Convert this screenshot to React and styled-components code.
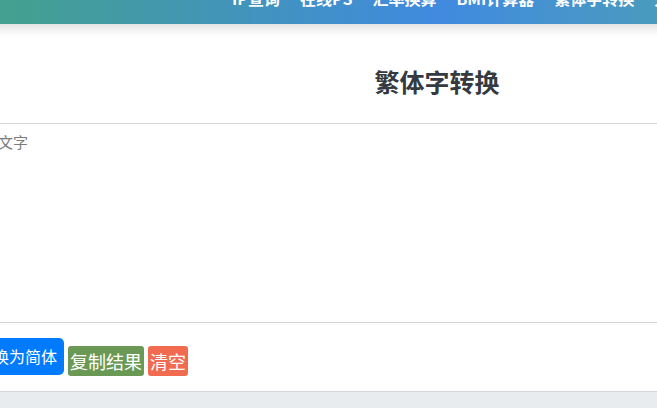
import React, { useState } from "react"
import styled, { createGlobalStyle } from "styled-components"

const GlobalStyle = createGlobalStyle`
html, body {
    margin: 0;
    padding: 0;
    overflow: hidden;
    background: #e9ecef;
    font-family: "Noto Sans CJK SC", "Noto Sans", sans-serif;
}
`

// the shot is taken scrolled (24px down, 138px right), so the page sits shifted in a clipped window
const Viewport = styled.div`
width: 100vw;
height: 100vh;
overflow: hidden;
`

const Page = styled.div`
width: 1150px;
margin: -24px 0 0 -138px;
`

const Header = styled.header`
position: relative;
z-index: 1;
height: 48px;
display: flex;
align-items: center;
padding: 0 0 4px 370px;
box-sizing: border-box;
background: linear-gradient(90deg, #3fa48a 0px, #44a08e 138px, #418ae0 578px, #4a9bbd 800px, #4aa0b0 1150px);
box-shadow: 0 3px 12px rgba(0, 0, 0, 0.16);
`

const Nav = styled.nav`
display: flex;
gap: 20px;
`

const NavLink = styled.a`
color: #fff;
font-size: 16px;
font-weight: 700;
text-decoration: none;
white-space: nowrap;
`

const Card = styled.main`
background: #fff;
border-bottom: 1px solid #d3d6da;
`

const Title = styled.h2`
margin: 0;
padding: 42px 0 27px;
text-align: center;
font-size: 25px;
line-height: 30px;
font-weight: 700;
color: #343a40;
`

const TextBox = styled.textarea`
display: block;
width: 100%;
height: 200px;
box-sizing: border-box;
margin: 0;
padding: 8px 12px 8px 15px;
border: 1px solid #d6d6d6;
resize: none;
outline: none;
font-family: inherit;
font-size: 15px;
line-height: 20px;
color: #333;
&::placeholder {
    color: #7a7a7a;
}
`

const Actions = styled.div`
display: flex;
align-items: flex-end;
gap: 4px;
height: 68px;
box-sizing: border-box;
padding: 0 0 15px 10px;
`

const Button = styled.button`
border: none;
margin: 0 0 ${p => (p.$big ? "1px" : "0")};
color: #fff;
font-family: inherit;
cursor: pointer;
background: ${p => p.$bg};
font-size: ${p => (p.$big ? "16px" : "18px")};
line-height: ${p => (p.$big ? "25px" : "30px")};
padding: ${p => (p.$big ? "6px 7px" : "0 2px")};
border-radius: ${p => (p.$big ? "5px" : "3px")};
`

const links = ["IP查询", "在线PS", "汇率换算", "BMI计算器", "繁体字转换", "人民币大写"]

export default function App() {
    const [text, setText] = useState("")
    return (
        <Viewport>
            <GlobalStyle />
            <Page>
                <Header>
                    <Nav>
                        {links.map(l => (
                            <NavLink key={l} href="#">{l}</NavLink>
                        ))}
                    </Nav>
                </Header>
                <Card>
                    <Title>繁体字转换</Title>
                    <TextBox
                        value={text}
                        onChange={e => setText(e.target.value)}
                        placeholder="请输入需要转换的文字"
                    />
                    <Actions>
                        <Button $big $bg="#007bff">转换为繁体</Button>
                        <Button $big $bg="#007bff">转换为简体</Button>
                        <Button $bg="#6a9955">复制结果</Button>
                        <Button $bg="#f06b50">清空</Button>
                    </Actions>
                </Card>
            </Page>
        </Viewport>
    )
}
